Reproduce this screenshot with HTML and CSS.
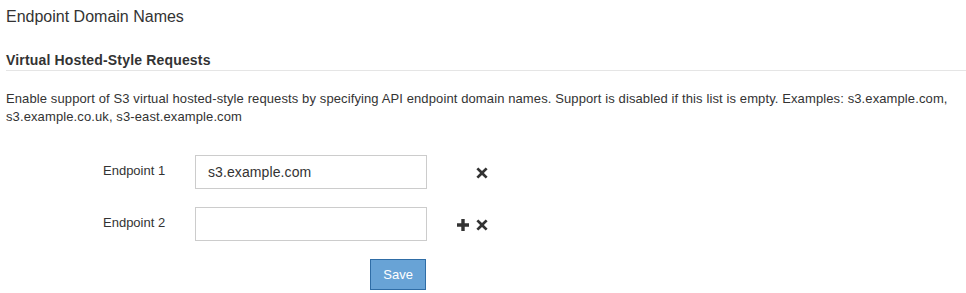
FILE: index.html
```html
<!DOCTYPE html>
<html lang="en">
<head>
<meta charset="utf-8">
<title>Endpoint Domain Names</title>
<link rel="stylesheet" href="styles.css">
</head>
<body>
<div class="page">
  <h1 class="title">Endpoint Domain Names</h1>
  <h2 class="section-title">Virtual Hosted-Style Requests</h2>
  <p class="desc">Enable support of S3 virtual hosted-style requests by specifying API endpoint domain names. Support is disabled if this list is empty. Examples: s3.example.com, s3.example.co.uk, s3-east.example.com</p>
  <form class="form">
    <div class="row">
      <label class="label" for="ep1">Endpoint 1</label>
      <input class="input" id="ep1" type="text" value="s3.example.com">
      <div class="actions">
        <span class="icon icon-hidden">
          <svg width="12" height="12" viewBox="0 0 12 12"><path d="M4.3 0h3.4v4.3H12v3.4H7.7V12H4.3V7.7H0V4.3h4.3z" fill="#333"/></svg>
        </span>
        <span class="icon">
          <svg width="12" height="12" viewBox="0 0 12 12"><path d="M2.3 0.4L6 4.1L9.7 0.4L11.6 2.3L7.9 6L11.6 9.7L9.7 11.6L6 7.9L2.3 11.6L0.4 9.7L4.1 6L0.4 2.3z" fill="#333"/></svg>
        </span>
      </div>
    </div>
    <div class="row">
      <label class="label" for="ep2">Endpoint 2</label>
      <input class="input" id="ep2" type="text" value="">
      <div class="actions">
        <span class="icon">
          <svg width="12" height="12" viewBox="0 0 12 12"><path d="M4.3 0h3.4v4.3H12v3.4H7.7V12H4.3V7.7H0V4.3h4.3z" fill="#333"/></svg>
        </span>
        <span class="icon">
          <svg width="12" height="12" viewBox="0 0 12 12"><path d="M2.3 0.4L6 4.1L9.7 0.4L11.6 2.3L7.9 6L11.6 9.7L9.7 11.6L6 7.9L2.3 11.6L0.4 9.7L4.1 6L0.4 2.3z" fill="#333"/></svg>
        </span>
      </div>
    </div>
    <div class="row row-submit">
      <span class="label"></span>
      <div class="submit-cell">
        <button class="btn" type="button">Save</button>
      </div>
    </div>
  </form>
</div>
</body>
</html>
```
FILE: styles.css
```css
html, body {
  margin: 0;
  padding: 0;
  background: #fff;
}
body {
  font-family: "Liberation Sans", Arial, Helvetica, sans-serif;
  color: #333;
}
.page {
  padding: 0 0 0 6px;
}
.title {
  margin: 7px 0 0 0;
  font-size: 16px;
  line-height: 20px;
  font-weight: normal;
  color: #333;
}
.section-title {
  margin: 23px 0 0 0;
  font-size: 14px;
  line-height: 20px;
  font-weight: bold;
  letter-spacing: 0.17px;
  color: #333;
  border-bottom: 1px solid #e5e5e5;
}
.desc {
  margin: 19px 0 0 0;
  font-size: 13px;
  line-height: 18px;
  letter-spacing: 0.11px;
  padding-right: 8px;
}
.form {
  margin: 29px 0 0 0;
  display: flex;
  flex-direction: column;
  gap: 18px;
}
.row {
  display: flex;
  align-items: flex-start;
  padding-left: 97px;
}
.label {
  width: 92px;
  flex: none;
  font-size: 13px;
  line-height: 18px;
  padding-top: 7px;
}
.input {
  box-sizing: border-box;
  width: 232px;
  height: 34px;
  margin: 0;
  padding: 6px 12px;
  border: 1px solid #ccc;
  border-radius: 0;
  font-family: "Liberation Sans", Arial, Helvetica, sans-serif;
  font-size: 14px;
  line-height: 20px;
  letter-spacing: 0.1px;
  color: #333;
  background: #fff;
  outline: none;
}
.actions {
  display: flex;
  align-items: center;
  height: 34px;
  margin-left: 30px;
  gap: 7px;
  padding-top: 2px;
  box-sizing: border-box;
}
.icon {
  display: block;
  width: 12px;
  height: 12px;
}
.icon svg {
  display: block;
}
.icon-hidden {
  visibility: hidden;
}
.submit-cell {
  width: 231px;
  display: flex;
  justify-content: flex-end;
}
.row-submit .label {
  padding-top: 0;
}
.btn {
  box-sizing: border-box;
  height: 31px;
  margin: 0;
  padding: 5px 12px;
  border: 1px solid #2f6da6;
  border-radius: 0;
  background: #68a3d6;
  color: #fff;
  font-family: "Liberation Sans", Arial, Helvetica, sans-serif;
  font-size: 13px;
  line-height: 19px;
  cursor: pointer;
}
```
